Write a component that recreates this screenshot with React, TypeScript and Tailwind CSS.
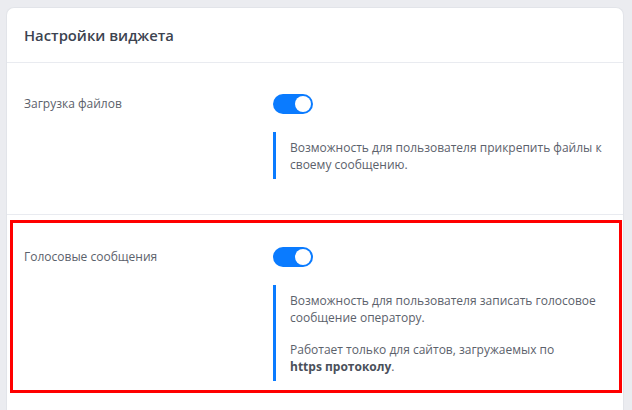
import React from "react";

const Toggle = () => (
  <div className="w-10 h-5 rounded-full bg-[#0a7bff] flex items-center justify-end pr-[2px]">
    <div className="w-4 h-4 rounded-full bg-white" />
  </div>
);

const Note = ({ children }: { children: React.ReactNode }) => (
  <div className="mt-[18px] border-l-[3px] border-[#0a7bff] pl-[14px] pt-[7px] pb-[6px] text-[12px] leading-[17px] text-[#5b616b]">
    {children}
  </div>
);

export default function App() {
  return (
    <div
      className="min-h-[410px] bg-[#ebecf0] pt-[7px] pl-[6px] pr-[8px]"
      style={{ fontFamily: '"Open Sans", "Noto Sans", sans-serif' }}
    >
      <div className="bg-white rounded-t-lg min-h-[403px] border-l border-r border-t border-[#e2e4e9]">
        {/* HEADER */}
        <div className="h-[55px] flex items-center pl-[17px] border-b border-[#e9ebf0]">
          <h1 className="text-[14.8px] font-semibold text-[#3c4350]">
            Настройки виджета
          </h1>
        </div>

        {/* FILE UPLOAD */}
        <div className="grid grid-cols-[249px_1fr] pl-[17px] pt-[31px] pb-[35px] border-b border-[#e9ebf0]">
          <div className="text-[12px] leading-[17px] text-[#5b616b] pt-[1px]">
            Загрузка файлов
          </div>
          <div className="pr-3">
            <Toggle />
            <Note>
              Возможность для пользователя прикрепить файлы к своему сообщению.
            </Note>
          </div>
        </div>

        {/* VOICE MESSAGES */}
        <div className="relative grid grid-cols-[249px_1fr] pl-[17px] pt-[32px] pb-[20px]">
          <div className="absolute left-[3px] right-[1px] top-[5px] h-[173px] border-[3px] border-[#ff0000]" />
          <div className="text-[12px] leading-[17px] text-[#5b616b] pt-[1px]">
            Голосовые сообщения
          </div>
          <div className="pr-3">
            <Toggle />
            <Note>
              <p>Возможность для пользователя записать голосовое сообщение оператору.</p>
              <p className="mt-[15px]">
                Работает только для сайтов, загружаемых по{" "}
                <b className="font-bold text-[#4a505a] whitespace-nowrap">https протоколу</b>.
              </p>
            </Note>
          </div>
        </div>
      </div>
    </div>
  );
}
